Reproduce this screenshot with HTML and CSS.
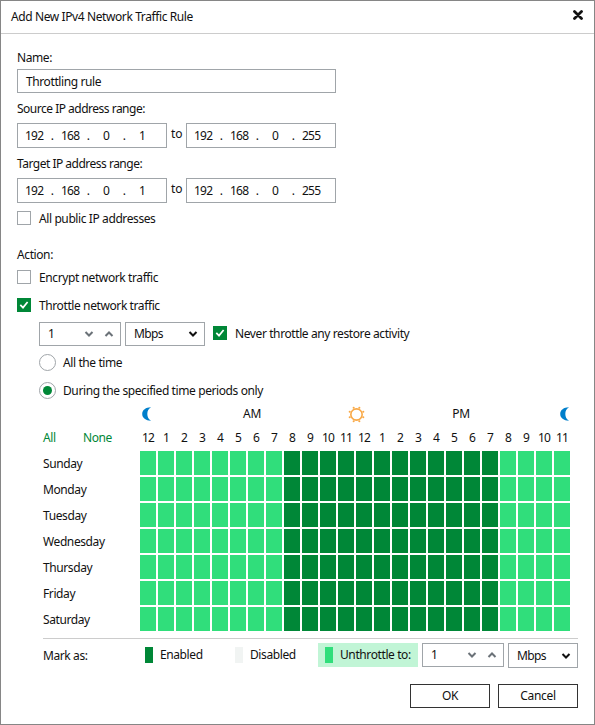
FILE: index.html
```html
<!DOCTYPE html>
<html lang="en">
<head>
    <meta charset="UTF-8">
    <meta name="viewport" content="width=device-width, initial-scale=1.0">
    <title>Add New IPv4 Network Traffic Rule</title>
    <link rel="stylesheet" href="styles.css">
</head>
<body>
    <svg class="defs">
        <symbol id="chevron" viewBox="0 0 10 6"><path d="M1.5 1 L5 4.5 L8.5 1" fill="none" stroke="currentColor" stroke-width="2"/></symbol>
        <symbol id="check" viewBox="0 0 14 14"><path d="M3.3 6.8 L6 9.6 L10.6 4" fill="none" stroke="#fff" stroke-width="1.7"/></symbol>
        <symbol id="moon" viewBox="0 0 10 14"><path d="M9 0.3 C4 0.2 0.2 3 0.2 7 C0.2 11 4 13.8 9 13.7 C6.6 12.2 5.3 10 5.3 7 C5.3 4 6.6 1.8 9 0.3 Z" fill="#007fcb"/></symbol>
    </svg>
    <div class="window">
        <header class="titlebar">
            <h1>Add New IPv4 Network Traffic Rule</h1>
            <svg class="close" viewBox="0 0 10 10"><path d="M1.5 1.5 L8.5 8.5 M8.5 1.5 L1.5 8.5" stroke="#111" stroke-width="2.8" stroke-linecap="round"/></svg>
        </header>
        <main>
            <div class="label">Name:</div>
            <div class="box name-input">Throttling rule</div>

            <div class="label range-label">Source IP address range:</div>
            <div class="ip-row">
                <div class="box ip"><span>192</span><span>.</span><span>168</span><span>.</span><span>0</span><span>.</span><span>1</span></div>
                <span class="to">to</span>
                <div class="box ip"><span>192</span><span>.</span><span>168</span><span>.</span><span>0</span><span>.</span><span>255</span></div>
            </div>
            <div class="label range-label">Target IP address range:</div>
            <div class="ip-row">
                <div class="box ip"><span>192</span><span>.</span><span>168</span><span>.</span><span>0</span><span>.</span><span>1</span></div>
                <span class="to">to</span>
                <div class="box ip"><span>192</span><span>.</span><span>168</span><span>.</span><span>0</span><span>.</span><span>255</span></div>
            </div>
            <div class="option public"><span class="checkbox"></span><span class="text">All public IP addresses</span></div>

            <div class="label action-label">Action:</div>
            <div class="option encrypt"><span class="checkbox"></span><span class="text">Encrypt network traffic</span></div>
            <div class="option throttle"><svg class="checkbox checked"><use href="#check"/></svg><span class="text">Throttle network traffic</span></div>

            <div class="speed-row">
                <div class="box spin"><span>1</span><svg class="chevron"><use href="#chevron"/></svg><svg class="chevron up"><use href="#chevron"/></svg></div>
                <div class="box select"><span>Mbps</span><svg class="chevron"><use href="#chevron"/></svg></div>
                <div class="option never"><svg class="checkbox checked"><use href="#check"/></svg><span class="text">Never throttle any restore activity</span></div>
            </div>
            <div class="radio-row"><span class="radio"></span><span>All the time</span></div>
            <div class="radio-row"><span class="radio selected"></span><span>During the specified time periods only</span></div>

            <section class="schedule">
                <div class="sky">
                    <svg class="moon"><use href="#moon"/></svg>
                    <span class="half am">AM</span>
                    <svg class="sun" viewBox="0 0 18 18">
                        <circle cx="9" cy="9" r="6" fill="none" stroke="#f9a947" stroke-width="1.7"/>
                        <g fill="#f9a947"><circle cx="6" cy="1.8" r="1.1"/><circle cx="12" cy="1.8" r="1.1"/><circle cx="16.2" cy="6" r="1.1"/><circle cx="16.2" cy="12" r="1.1"/><circle cx="12" cy="16.2" r="1.1"/><circle cx="6" cy="16.2" r="1.1"/><circle cx="1.8" cy="12" r="1.1"/><circle cx="1.8" cy="6" r="1.1"/></g>
                    </svg>
                    <span class="half pm">PM</span>
                    <svg class="moon"><use href="#moon"/></svg>
                </div>
                <div class="hours">
                    <div class="links"><a>All</a><a>None</a></div>
                    <div class="hour-grid" id="hours"></div>
                </div>
                <div id="days"></div>
            </section>

            <div class="legend">
                <span class="mark">Mark as:</span>
                <div class="legend-item enabled"><i class="swatch"></i>Enabled</div>
                <div class="legend-item disabled"><i class="swatch"></i>Disabled</div>
                <div class="legend-item unthrottle"><i class="swatch"></i>Unthrottle to:</div>
                <div class="box spin"><span>1</span><svg class="chevron"><use href="#chevron"/></svg><svg class="chevron up"><use href="#chevron"/></svg></div>
                <div class="box select small"><span>Mbps</span><svg class="chevron"><use href="#chevron"/></svg></div>
            </div>
            <div class="buttons">
                <button>OK</button>
                <button>Cancel</button>
            </div>
        </main>
    </div>

    <script>
        const days = ['Sunday', 'Monday', 'Tuesday', 'Wednesday', 'Thursday', 'Friday', 'Saturday'];
        let hours = '';
        let cells = '';
        for (let h = 0; h < 24; h++) {
            hours += `<span>${h % 12 || 12}</span>`;
            // full throttling during 8 AM - 8 PM
            cells += `<i class="${h >= 8 && h < 20 ? 'on' : ''}"></i>`;
        }
        document.getElementById('hours').innerHTML = hours;
        document.getElementById('days').innerHTML = days
            .map(day => `<div class="day"><span>${day}</span><div class="hour-grid cells">${cells}</div></div>`)
            .join('');
    </script>
</body>
</html>
```
FILE: styles.css
```css
* {
    box-sizing: border-box;
}
body {
    margin: 0;
    font: 12px/16px "Noto Sans", "Open Sans", sans-serif;
    letter-spacing: -0.4px;
    color: #111;
    background: #fff;
    white-space: nowrap;
}
svg {
    display: block;
    flex: none;
}
.defs {
    display: none;
}
.window {
    width: 595px;
    height: 725px;
    border: 1px solid #868686;
}
.titlebar {
    display: flex;
    justify-content: space-between;
    align-items: flex-start;
    height: 33px;
    padding: 8px 11px 0 10px;
    border-bottom: 1px solid #ccc;
}
h1 {
    margin: 0;
    font-size: 12px;
    font-weight: normal;
}
.close {
    width: 10px;
    height: 10px;
    margin-top: 1px;
}
main {
    padding: 15px 16px 0;
}
.label {
    height: 16px;
    padding-top: 1px;
}
.box {
    display: flex;
    align-items: center;
    height: 24px;
    border: 1px solid #a0a5a9;
    background: #fff;
}
.name-input {
    width: 319px;
    margin-top: 4px;
    padding: 1px 0 0 8px;
}
.range-label {
    margin-top: 7px;
    letter-spacing: -0.5px;
}
.ip-row {
    display: flex;
    margin-top: 7px;
}
.ip {
    display: grid;
    grid-template-columns: repeat(7, 18px);
    width: 150px;
    height: 25px;
    padding-left: 7px;
    text-align: center;
    letter-spacing: -0.8px;
}
.to {
    width: 19px;
    padding: 3px 0 0 4px;
    letter-spacing: 0;
}
.option {
    display: flex;
    align-items: center;
    gap: 8px;
    height: 14px;
}
.text {
    padding-top: 2px;
}
.checkbox {
    flex: none;
    width: 14px;
    height: 14px;
    border: 1px solid #a0a5a9;
}
.checked {
    border: 0;
    background: #008737;
}
.public {
    margin-top: 8px;
}
.action-label {
    margin-top: 21px;
}
.encrypt {
    margin-top: 8px;
}
.throttle {
    margin-top: 14px;
}
.speed-row {
    display: flex;
    gap: 4px;
    margin: 10px 0 0 22px;
}
.spin {
    width: 82px;
    padding: 0 6px 0 8px;
}
.spin span,
.select span {
    flex: 1;
}
.select span {
    letter-spacing: -0.6px;
}
.chevron {
    width: 10px;
    height: 6px;
    color: #6b7278;
}
.up {
    margin-left: 10px;
    transform: scaleY(-1);
}
.select {
    width: 80px;
    padding: 0 6px 0 8px;
}
.select .chevron {
    color: #111;
}
.never {
    margin: 4px 0 0 4px;
}
.radio-row {
    display: flex;
    align-items: center;
    gap: 7px;
    height: 17px;
    margin: 8px 0 0 22px;
}
.radio-row + .radio-row {
    margin-top: 11px;
}
.radio {
    display: grid;
    place-items: center;
    width: 17px;
    height: 17px;
    border: 1px solid #a0a5a9;
    border-radius: 50%;
}
.selected::after {
    content: "";
    width: 9px;
    height: 9px;
    border-radius: 50%;
    background: #008737;
}
.schedule {
    width: 535px;
    margin: 6px 0 0 26px;
}
.sky {
    display: flex;
    align-items: center;
    height: 18px;
    padding: 0 8px 0 99px;
}
.moon {
    width: 10px;
    height: 14px;
}
.sun {
    width: 17px;
    height: 17px;
}
.half {
    flex: 1;
    text-align: center;
}
.am {
    padding-left: 4px;
}
.pm {
    padding-right: 3px;
}
.hours,
.day {
    display: flex;
    justify-content: space-between;
    padding-right: 8px;
}
.hours {
    height: 21px;
    margin-top: 7px;
}
.links {
    color: #008737;
}
.links a {
    display: inline-block;
    width: 40px;
}
.hour-grid {
    display: grid;
    grid-template-columns: repeat(24, 16px);
    gap: 2px;
    justify-items: center;
    letter-spacing: -0.8px;
}
.day {
    height: 24px;
    margin-bottom: 2px;
    line-height: 26px;
}
.cells i {
    width: 16px;
    height: 24px;
    background: #30de7b;
}
.cells .on {
    background: #008737;
}
.legend {
    display: flex;
    width: 535px;
    margin: 7px 0 0 26px;
    padding-top: 4px;
    border-top: 1px solid #ccc;
}
.mark {
    width: 102px;
    padding-top: 5px;
}
.legend-item {
    display: flex;
    align-items: center;
    gap: 7px;
    height: 24px;
}
.swatch {
    width: 8px;
    height: 16px;
    background: #008737;
}
.enabled {
    width: 90px;
}
.disabled {
    width: 83px;
}
.disabled .swatch {
    background: #f1f4f3;
}
.unthrottle {
    width: 100px;
    padding-left: 7px;
    margin-right: 4px;
    background: #c1f5d6;
}
.unthrottle .swatch {
    background: #30de7b;
}
.small {
    width: 70px;
    height: 25px;
    margin-left: 4px;
}
.buttons {
    display: flex;
    justify-content: flex-end;
    gap: 8px;
    margin-top: 16px;
}
button {
    width: 80px;
    height: 24px;
    padding: 0;
    border: 1px solid #333;
    background: #fff;
    font: inherit;
    letter-spacing: -0.3px;
    color: inherit;
}
```
